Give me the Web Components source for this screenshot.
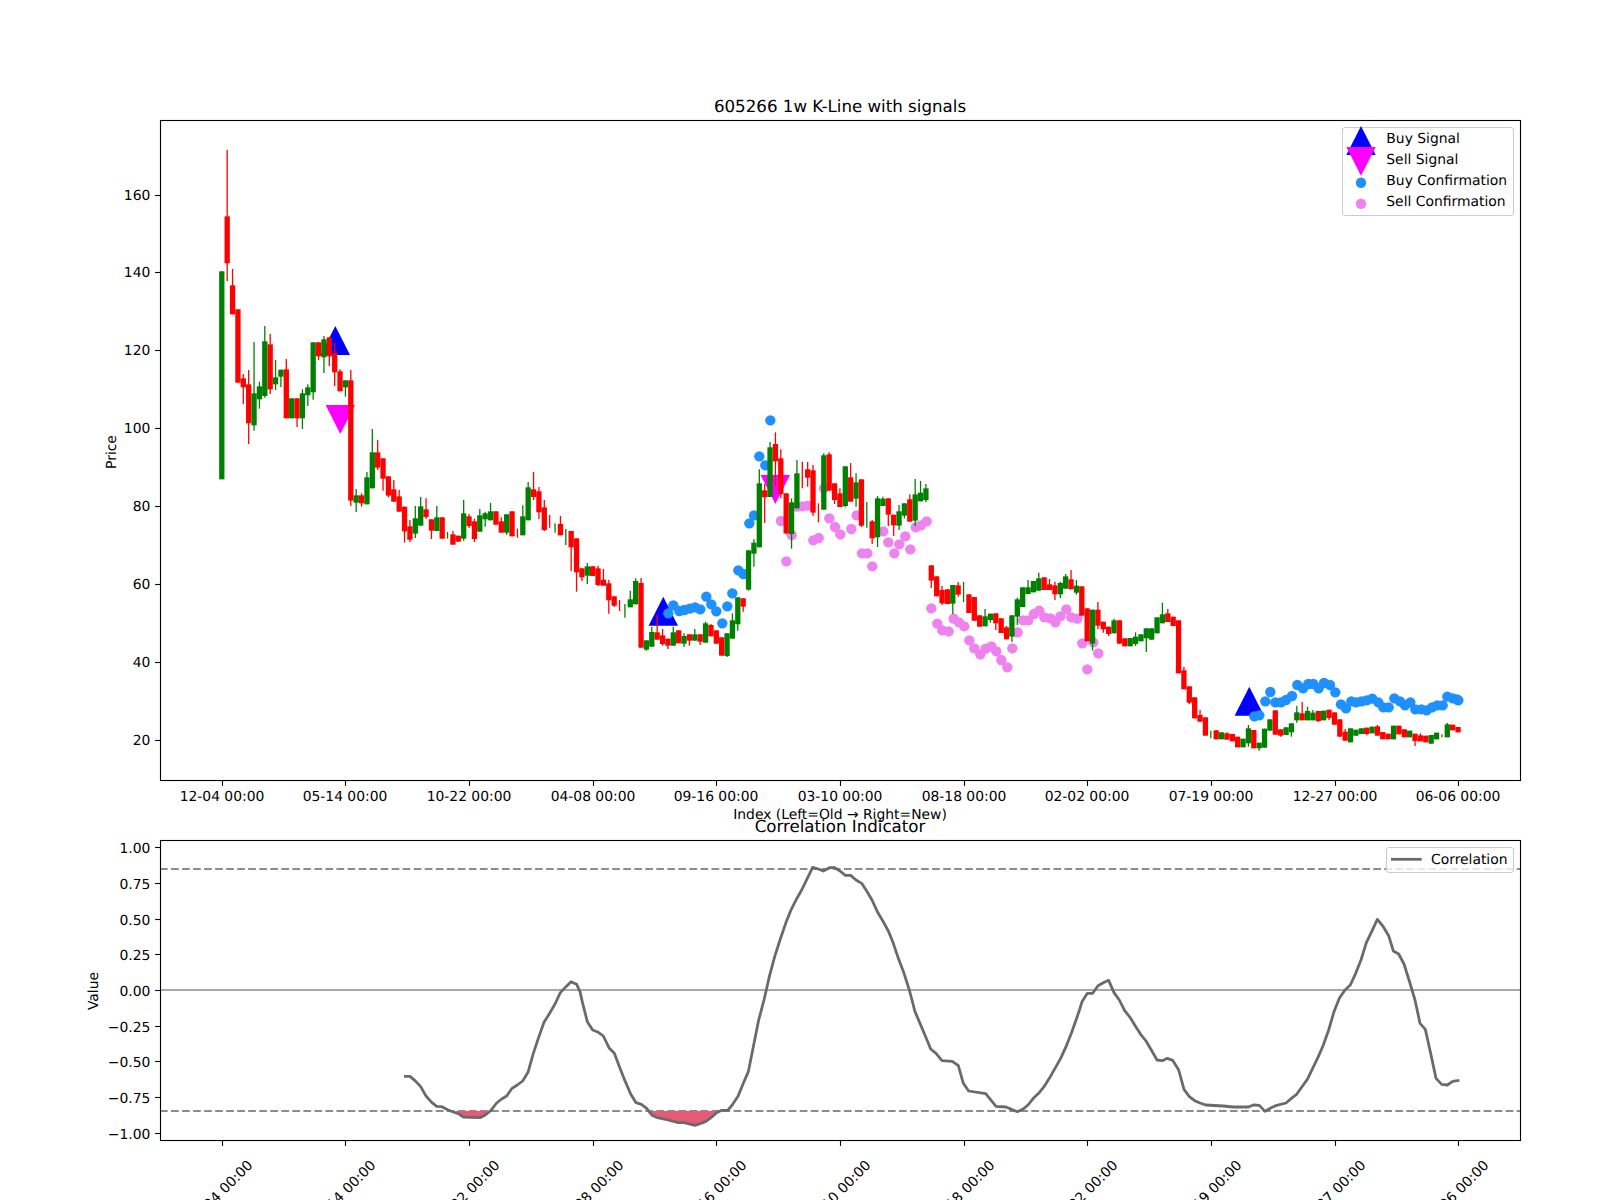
<!DOCTYPE html>
<html lang="en">
<head>
<meta charset="utf-8">
<title>605266 1w K-Line with signals</title>
<style>
html,body{margin:0;padding:0;background:#fff;overflow:hidden}
</style>
</head>
<body>
<mpl-figure>
  <price-panel>
    <chart-legend style="--top:127px;--w:171.7px;--h:88.7px;--pad:1px;--col:43px">
      <legend-row kind="buy">Buy Signal</legend-row>
      <legend-row kind="sell">Sell Signal</legend-row>
      <legend-row kind="buyc">Buy Confirmation</legend-row>
      <legend-row kind="sellc">Sell Confirmation</legend-row>
    </chart-legend>
  </price-panel>
  <corr-panel>
    <chart-legend style="--top:22px;--w:128px;--h:25.6px;--pad:2px;--col:44px">
      <legend-row kind="line">Correlation</legend-row>
    </chart-legend>
  </corr-panel>
</mpl-figure>
<script>
const FONT='"DejaVu Sans","Liberation Sans",sans-serif';
const TICKS=[222,345,469,593,716,840,964,1087,1211,1335,1458];
const LABELS=['12-04 00:00','05-14 00:00','10-22 00:00','04-08 00:00','09-16 00:00','03-10 00:00','08-18 00:00','02-02 00:00','07-19 00:00','12-27 00:00','06-06 00:00'];
const X=i=>221.8+5.375*i;
const Z=(ox,oy,p)=>p.map(([x,y])=>[+(ox+x/3).toFixed(2),+(oy+y/3).toFixed(2)]);
const poly=p=>p.map(q=>q.join(',')).join(' ');

/* candles: colour, body top, body bottom, wick top, wick bottom, in crop units of a 3x view */
const G='#008000',R='#ff0000';
const groups=[
[100,0,[[G,514,1138],[R,349,490,150,543],[R,556,643,507,643],[R,628,848],[R,835,862,822,912],[R,853,970,810,1032],[G,880,976,726,992],[G,859,898,845,926],[G,724,888,678,893],[R,733,868,702,882],[G,832,853,780,870],[G,809,830,809,861],[R,808,955,777,955],[G,895,955],[R,895,955,895,981],[G,880,955,868,987],[G,862,886,853,918],[G,727,877,727,899],[R,727,769,727,780],[G,718,772,708,819],[R,712,769,712,798],[R,760,817,730,858],[R,814,874,808,874],[G,841,862,841,890],[R,841,1202,810,1218]]],
[420,25,[[G,226,248,207,276],[R,226,250,220,260],[G,172,253,156,253],[G,97,205,27,205],[R,97,143,60,150],[R,115,176,115,212],[R,169,227,169,232],[R,208,245,180,245],[R,229,275,210,275],[R,260,334,260,368],[R,319,359,300,366],[G,295,341,258,354],[G,259,317,231,317],[R,268,291,235,297],[R,298,332,298,357],[G,292,333,258,333],[R,292,356],[G,346,346,336,356],[R,343,374,333,374],[R,347,365],[G,280,356,240,362],[R,289,318,282,324],[R,304,357,296,366],[G,286,335,267,335],[G,280,298,275,320],[G,274,301,249,301],[R,274,314],[R,304,338,292,338],[G,283,338,283,344],[R,274,349],[R,340,340,326,353],[G,289,346,256,346],[G,202,301,186,301],[R,208,231,156,240],[R,214,277,201,297]]],
[400,60,[[R,322,390,300,393],[R,364,364,345,383],[G,384,384,370,398],[R,372,406,348,406],[G,411,411,387,435],[R,393,442,393,513],[R,415,517,415,575],[R,505,532,505,543],[G,499,527,489,552],[R,499,528],[R,505,555,497,558],[R,539,557,507,557],[R,550,601,540,641],[R,589,617,589,621],[R,616,616,600,633],[G,632,632,612,653],[G,598,622,572,622],[G,543,613,535,613],[R,549,743,534,743],[G,721,749,721,752],[G,696,740,680,740],[R,697,719,645,719],[R,706,732,687,737],[R,716,737,716,747],[G,697,737,680,737],[R,691,730],[G,708,731,700,741],[R,703,722,703,737],[G,703,722,687,722],[R,703,725,703,735],[G,670,728,665,728],[R,675,709,672,709],[R,691,731],[R,712,767],[G,700,768,700,771],[G,661,716,640,716],[G,592,673,592,692],[R,595,620,595,635],[G,451,569,450,572],[G,428,461,418,500],[G,250,442,208,442],[R,271,292,252,369],[G,142,291,126,291],[R,132,184,97,260],[R,175,282,148,295],[R,280,400,280,403],[G,307,402,295,446],[G,220,325,180,325],[R,225,225,185,265],[R,208,233,186,260],[R,211,338,195,347],[R,338,338,310,367],[G,166,329,160,329],[R,163,272,157,272],[R,250,300,250,312],[R,280,321,265,321],[G,199,318,199,322],[R,232,305,189,305],[G,247,296,220,320],[R,238,377,238,381],[G,345,345,306,383],[R,364,415,360,432],[G,295,412,288,441],[G,296,318,290,318],[R,295,344,295,378],[R,344,376,344,408],[G,334,377,315,390],[G,310,347,310,355],[R,298,365,283,365],[G,283,362,237,378],[G,278,304,243,304],[G,265,300,252,306]]],
[460,132,[[R,316,362,316,384],[R,349,409],[R,390,430,378,435],[R,388,432],[G,375,431,375,462],[R,376,404,366,410],[G,396,396,366,426],[R,403,459],[R,411,482],[R,466,500],[G,469,499,447,499],[G,461,480,461,488],[R,460,490,460,510],[R,475,519],[R,502,538,498,538],[G,466,530,466,546],[G,418,470,413,495],[G,382,441],[G,382,402,360,402],[G,363,397],[G,355,392,338,392],[R,352,390],[R,373,390,357,390],[R,376,403,365,420],[G,369,403,365,414],[G,349,386,342,386],[R,358,388,330,388],[G,377,398,360,404],[R,379,467],[R,445,544],[G,449,551,449,572],[R,449,497,426,508],[R,485,508,485,518],[R,500,522,500,528],[G,481,520,476,520],[R,481,551],[R,535,559],[G,534,559],[G,530,552,517,558],[G,523,544],[G,505,535,505,576],[G,505,539],[G,472,520],[G,463,490,428,490],[R,460,486,447,486],[R,470,498],[R,481,640],[R,631,688,620,688],[R,679,728,679,732],[R,712,775]]],
[640,182,[[R,225,245,210,245],[R,232,287],[G,283,283,272,295],[R,271,298],[G,277,298],[R,280,299,277,299],[R,282,304],[R,290,322],[G,296,322],[G,265,310,255,320],[R,270,325],[G,308,325,308,332],[G,266,323],[G,238,272],[R,211,284],[R,268,287,268,290],[G,262,285],[G,250,277,250,290],[G,217,241,197,248],[R,220,241,186,241],[G,213,241,200,241],[G,218,241,210,241],[R,213,243,213,246],[G,212,241],[R,209,234,209,240],[R,217,254],[R,238,290],[R,275,302,267,302],[G,265,307],[G,269,287],[G,265,282],[R,263,282,263,286],[G,260,280],[R,259,287,255,287],[R,276,298],[R,281,298],[G,257,298],[R,257,283],[R,268,292],[G,272,292],[R,281,303,281,318],[R,286,304,280,304],[R,287,307],[G,285,311],[G,278,298],[R,288,288,283,292],[G,253,292,249,292],[R,254,271],[R,261,277]]]
];
const candleSvg=()=>{let s='';
 for(const [oy,start,rows] of groups){rows.forEach((r,k)=>{
  const [c,t,b,wt=t,wb=b]=r;const x=X(start+k).toFixed(2);const y=v=>(oy+v/3).toFixed(2);
  if(wb>wt)s+=`<line x1="${x}" x2="${x}" y1="${y(wt)}" y2="${y(wb)}" stroke="${c}" stroke-width="1.3"/>`;
  if(b>t)s+=`<rect x="${(+x-2.65).toFixed(2)}" y="${y(t)}" width="5.3" height="${((b-t)/3).toFixed(2)}" fill="${c}"/>`;
 });}
 return s;};

const blue=[...Z(540,400,[[385,640],[400,616],[418,633],[433,630],[449,626],[465,622],[481,628],[499,590],[514,613],[529,634],[547,670],[562,619],[577,580],[595,511],[610,522],[628,370],[642,346],[658,169],[676,196],[691,61]]),
 ...Z(1200,640,[[163,229],[178,226],[196,184],[211,156],[226,187],[243,187],[258,180],[276,168],[292,135],[309,145],[325,132],[340,132],[356,145],[372,129],[390,135],[406,157],[423,193],[438,205],[454,184],[468,187],[484,184],[500,181],[517,176],[535,187],[550,202],[566,202],[583,175],[600,184],[615,196],[631,187],[646,208],[664,208],[680,211],[696,202],[712,196],[728,196],[742,170],[758,175],[771,178],[775,181]])];
const pink=[...Z(540,400,[[723,363],[739,484],[755,405],[771,320],[787,319],[803,317],[820,421],[836,414],[852,265],[868,355],[885,381],[901,403],[934,387],[950,346],[966,460],[982,460],[997,499],[1030,394],[1045,427],[1063,460],[1078,433],[1096,409],[1111,448],[1127,382],[1143,376],[1160,364]]),
 ...Z(920,460,[[34,445],[52,491],[67,511],[86,514],[101,476],[117,487],[133,499],[148,541],[163,565],[181,583],[197,566],[214,559],[229,574],[244,600],[262,622],[277,565],[293,517],[309,481],[325,481],[342,462],[358,452],[373,472],[391,475],[406,487],[421,469],[439,448],[454,472],[472,476],[487,550],[502,628],[520,547],[535,580]])];
const tri=(cx,top,dir,col)=>dir>0?`<polygon points="${cx},${top} ${cx-14.7},${top+29} ${cx+14.7},${top+29}" fill="${col}"/>`:`<polygon points="${cx-14.7},${top} ${cx+14.7},${top} ${cx},${top+29}" fill="${col}"/>`;
const dots=(a,c)=>a.map(([x,y])=>`<circle cx="${x}" cy="${y}" r="5.2" fill="${c}"/>`).join('');

const curve=[...Z(80,780,[[972,889],[990,889],[1005,902],[1022,920],[1038,948],[1055,967],[1070,979],[1086,980],[1104,990],[1120,996],[1137,1002],[1150,1011],[1170,1012],[1200,1013],[1216,1005],[1232,992],[1250,969],[1265,957],[1280,948],[1296,925],[1312,915],[1328,903],[1344,877],[1360,820],[1375,775],[1392,727],[1410,698],[1425,672],[1441,638],[1458,620],[1473,605],[1490,613]]),
 ...Z(580,820,[[0,515],[8,550],[22,605],[38,630],[55,637],[70,648],[88,685],[103,700],[120,745],[136,785],[152,822],[168,848],[184,853],[200,865],[216,886],[232,893],[264,900],[295,908],[312,908],[345,916],[360,911],[378,904],[393,893],[410,878],[425,871],[443,871],[458,853],[474,829],[490,790],[505,755],[520,680],[536,600],[552,540],[568,470],[584,410],[600,360],[617,310],[632,272],[648,240],[665,210],[682,175],[698,142],[715,147],[730,153],[748,143],[764,143],[780,153],[796,166],[812,166],[828,180],[845,190],[860,213],[876,240],[893,277],[908,302],[925,333],[940,370],[955,415],[972,460],[988,510],[1005,575],[1020,610],[1036,648],[1052,687],[1068,700],[1086,722],[1117,724],[1135,737],[1150,790],[1166,813],[1217,821],[1248,859],[1278,861],[1312,875],[1328,868],[1344,855],[1360,835],[1376,820],[1392,800],[1408,775],[1425,745],[1442,715],[1458,680],[1474,640],[1490,595]]),
 ...Z(1080,820,[[0,565],[6,545],[22,520],[38,520],[54,497],[70,488],[86,481],[102,518],[118,540],[134,572],[150,592],[166,618],[182,643],[198,663],[214,690],[231,720],[247,722],[262,715],[278,721],[296,750],[312,808],[328,830],[344,842],[360,849],[377,855],[430,858],[460,861],[505,861],[520,855],[538,856],[555,874],[572,864],[590,856],[618,849],[634,835],[650,823],[666,800],[682,778],[698,745],[715,710],[730,675],[746,630],[762,575],[778,535],[795,510],[811,495],[827,460],[843,420],[859,368],[875,335],[892,298],[910,320],[926,347],[940,393],[956,402],[972,432],[988,483],[1005,540],[1020,610],[1036,628],[1052,700],[1068,775],[1085,793],[1102,795],[1118,784],[1138,781]])];
const fills=[Z(80,780,[[1125,993],[1137,1002],[1150,1011],[1170,1012],[1200,1013],[1216,1005],[1225,993]]),
 Z(580,820,[[212,873],[216,886],[232,893],[264,900],[295,908],[312,908],[345,916],[360,911],[378,904],[393,893],[412,873]]),
 Z(1080,820,[[547,873],[555,875],[563,873]])];

const xAxis=(y)=>TICKS.map(t=>`<line x1="${t+.5}" x2="${t+.5}" y1="${y}" y2="${y+4.9}" stroke="#000" stroke-width="1.11"/>`).join('');
const yAxis=(list,off)=>list.map(([y,l])=>`<line x1="155.1" x2="160" y1="${y}" y2="${y}" stroke="#000" stroke-width="1.11"/><text x="150.3" y="${y+off}" text-anchor="end">${l}</text>`).join('');

class MplFigure extends HTMLElement{constructor(){super();this.attachShadow({mode:'open'}).innerHTML=`<style>:host{display:flex;flex-direction:column;width:1600px;height:1200px;overflow:hidden;background:#fff;color:#000;font-family:${FONT}}</style><slot></slot>`;}}
class PricePanel extends HTMLElement{constructor(){super();this.attachShadow({mode:'open'}).innerHTML=`<style>:host{display:block;position:relative;flex:0 0 825px;height:825px}svg{display:block;width:1600px;height:825px;overflow:visible}text{font-size:13.89px;fill:#000;font-family:${FONT};text-rendering:geometricPrecision}.t{font-size:16.67px}</style>
<svg viewBox="0 0 1600 825" xmlns="http://www.w3.org/2000/svg">
${tri(335.3,326,1,'#0000ff')}${tri(663.3,596.7,1,'#0000ff')}${tri(1249.3,686.7,1,'#0000ff')}${tri(340.3,405,-1,'#ff00ff')}${tri(775.3,475,-1,'#ff00ff')}
${dots(blue,'#1e90ff')}${dots(pink,'#ee82ee')}${candleSvg()}
<rect x="160.5" y="120.5" width="1360" height="660" fill="none" stroke="#000" stroke-width="1.11"/>
${xAxis(781)}${TICKS.map((t,i)=>`<text x="${t}" y="801" text-anchor="middle">${LABELS[i]}</text>`).join('')}
${yAxis([[195.5,160],[272.5,140],[350.5,120],[428.5,100],[506.5,80],[584.5,60],[662.5,40],[740.5,20]],4.4)}
<text class="t" x="840" y="112" text-anchor="middle">605266 1w K-Line with signals</text>
<text x="840" y="819.3" text-anchor="middle">Index (Left=Old → Right=New)</text>
<text x="116" y="452" text-anchor="middle" transform="rotate(-90 116 452)">Price</text>
</svg><slot></slot>`;}}
class CorrPanel extends HTMLElement{constructor(){super();const yt=[[847.5,'1.00'],[883.5,'0.75'],[919.5,'0.50'],[954.5,'0.25'],[990.5,'0.00'],[1026.5,'−0.25'],[1061.5,'−0.50'],[1097.5,'−0.75'],[1133.5,'−1.00']];
this.attachShadow({mode:'open'}).innerHTML=`<style>:host{display:block;position:relative;flex:0 0 375px;height:375px;overflow:visible}svg{display:block;width:1600px;height:375px;overflow:visible}text{font-size:13.89px;fill:#000;font-family:${FONT};text-rendering:geometricPrecision}.t{font-size:16.67px}</style>
<svg viewBox="0 825 1600 375" xmlns="http://www.w3.org/2000/svg">
<line x1="160" x2="1520" y1="990" y2="990" stroke="#a9a9a9" stroke-width="2.08"/>
<line x1="160" x2="1520" y1="869" y2="869" stroke="#8c8c8c" stroke-width="2.08" stroke-dasharray="7.7 3.33"/>
<line x1="160" x2="1520" y1="1111" y2="1111" stroke="#8c8c8c" stroke-width="2.08" stroke-dasharray="7.7 3.33"/>
${fills.map(f=>`<polygon points="${poly(f)}" fill="#e55a75"/>`).join('')}
<polyline points="${poly(curve)}" fill="none" stroke="#6a6a6a" stroke-width="2.78" stroke-linejoin="round"/>
<rect x="160.5" y="840.5" width="1360" height="300" fill="none" stroke="#000" stroke-width="1.11"/>
${xAxis(1141)}${TICKS.map((t,i)=>`<text x="${t-2}" y="1197.5" text-anchor="middle" transform="rotate(-45 ${t-2} 1192.5)">${LABELS[i]}</text>`).join('')}
${yAxis(yt,5)}
<text class="t" x="840" y="831.7" text-anchor="middle">Correlation Indicator</text>
<text x="98" y="991" text-anchor="middle" transform="rotate(-90 98 991)">Value</text>
</svg><slot></slot>`;}}
class ChartLegend extends HTMLElement{constructor(){super();this.attachShadow({mode:'open'}).innerHTML=`<style>:host{display:flex;flex-direction:column;position:absolute;top:var(--top);right:86px;width:var(--w);height:var(--h);box-sizing:border-box;padding-top:var(--pad);background:rgba(255,255,255,.8);border:1px solid #ccc;border-radius:3px}</style><slot></slot>`;}}
class LegendRow extends HTMLElement{constructor(){super();this.attachShadow({mode:'open'});}
connectedCallback(){const k=this.getAttribute('kind');const g={
 buy:'<polygon points="18,-3 3.3,26 32.7,26" fill="#0000ff"/>',
 sell:'<polygon points="3.3,-3 32.7,-3 18,25.7" fill="#ff00ff"/>',
 buyc:'<circle cx="18" cy="11.7" r="5.2" fill="#1e90ff"/>',
 sellc:'<circle cx="18" cy="11.7" r="5.2" fill="#ee82ee"/>',
 line:'<line x1="4" x2="34.7" y1="9.3" y2="9.3" stroke="#6a6a6a" stroke-width="2.78"/>'}[k];
 this.shadowRoot.innerHTML=`<style>:host{display:grid;grid-template-columns:var(--col) 1fr;height:21px;line-height:21px;font-size:13.89px;font-family:${FONT};color:#000;white-space:nowrap;position:relative;text-rendering:geometricPrecision}svg{width:var(--col);height:21px;overflow:visible;display:block}</style><svg xmlns="http://www.w3.org/2000/svg">${g}</svg><span><slot></slot></span>`;}}
customElements.define('mpl-figure',MplFigure);
customElements.define('price-panel',PricePanel);
customElements.define('corr-panel',CorrPanel);
customElements.define('chart-legend',ChartLegend);
customElements.define('legend-row',LegendRow);
</script>
</body>
</html>
